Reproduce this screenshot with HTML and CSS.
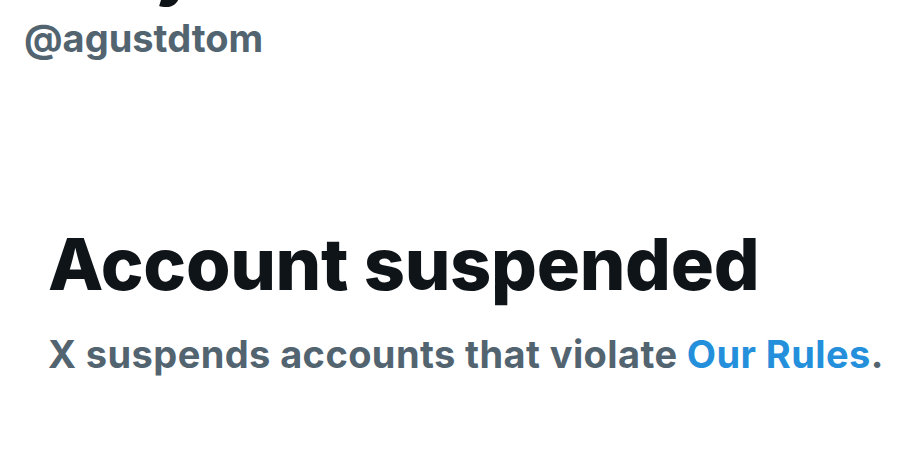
FILE: index.html
```html
<!DOCTYPE html>
<html lang="en">
<head>
  <meta charset="UTF-8">
  <meta name="viewport" content="width=device-width, initial-scale=1.0">
  <title>@agustdtom / X</title>
  <link rel="stylesheet" href="styles.css">
</head>
<body>

  <div class="profile-head">
    <h1 class="display-name">Tomy</h1>
    <div class="handle">@agustdtom</div>
  </div>

  <div class="suspended">
    <h2 class="suspended-title">Account suspended</h2>
    <p class="suspended-text">X suspends accounts that violate <a href="#" class="rules-link">Our Rules</a>.</p>
  </div>

</body>
</html>
```

FILE: styles.css
```css
body {
  font-family: Inter, "Noto Sans", sans-serif;
  background-color: #ffffff;
  margin: 0;
  height: 100vh;
  overflow: hidden;
}

.profile-head {
  padding-left: 24px;
}

/* name sits mostly above the crop, only the descender shows */
.display-name {
  font-size: 62px;
  font-weight: 800;
  color: #0f1419;
  line-height: 60px;
  margin: -58px 0 0 0;
}

.handle {
  font-size: 38px;
  font-weight: 700;
  color: #536471;
  line-height: 46px;
  margin-top: 13px;
}

.suspended {
  padding: 0 20px 0 48px;
  margin-top: 161px;
}

.suspended-title {
  font-size: 72px;
  font-weight: 800;
  color: #0f1419;
  line-height: 84px;
  letter-spacing: -0.3px;
  margin: 0;
}

.suspended-text {
  font-size: 38px;
  font-weight: 700;
  color: #536471;
  line-height: 46px;
  letter-spacing: 0.4px;
  white-space: nowrap;
  margin: 25px 0 0 0;
}

.rules-link {
  color: #2490dc;
  text-decoration: none;
}
```
